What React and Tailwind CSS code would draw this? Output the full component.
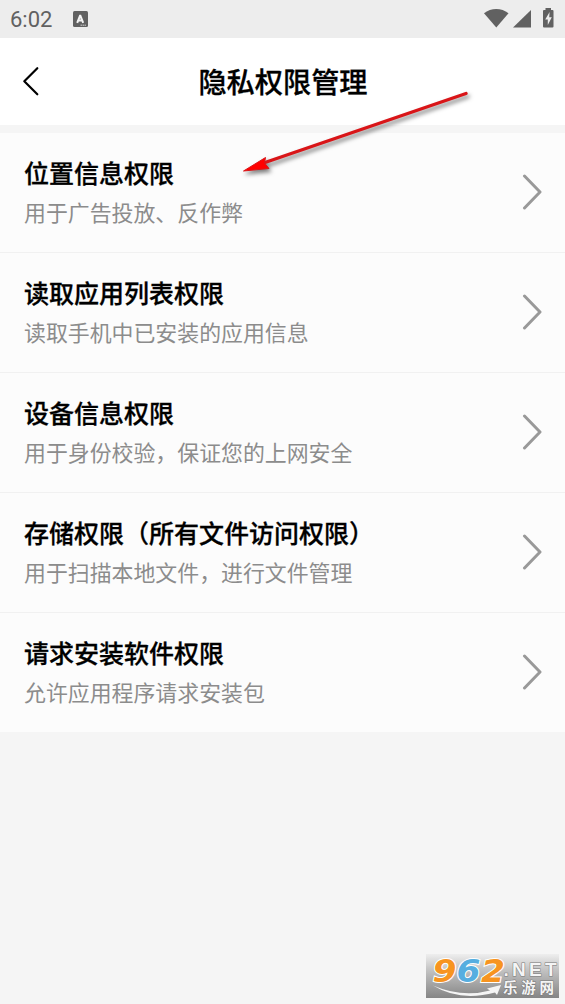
import React from 'react';

const permissions = [
  { id: 'location', title: '位置信息权限', description: '用于广告投放、反作弊' },
  { id: 'apps', title: '读取应用列表权限', description: '读取手机中已安装的应用信息' },
  { id: 'device', title: '设备信息权限', description: '用于身份校验，保证您的上网安全' },
  { id: 'storage', title: '存储权限（所有文件访问权限）', description: '用于扫描本地文件，进行文件管理' },
  { id: 'install', title: '请求安装软件权限', description: '允许应用程序请求安装包' },
];

const StatusBar = () => (
  <div className="flex h-[38px] items-center justify-between bg-[#ededed] pl-[10px] pr-[10px] text-[#616161]">
    <div className="flex items-center gap-[21px]">
      <span className="font-[Roboto,sans-serif] text-[22px] leading-[38px] pt-[2px]">6:02</span>
      <svg width="15" height="16" viewBox="0 0 15 16">
        <rect width="15" height="16" rx="1.5" fill="#616161" />
        <path d="M4.200 11.800 7 4.800h.4l2.800 7M5.200 9.600h4" fill="none" stroke="#f4f4f4" strokeWidth="2" />
        <path d="M7.500 14.200H13.500" stroke="#d0d0d0" strokeWidth="1" strokeDasharray="1.5 .5" />
      </svg>
    </div>
    <svg width="71" height="22" viewBox="0 0 71 22" fill="#616161">
      <path d="M0 5.200C7-.5 17.500-.5 24.500 5.200L12.300 19.500Z" />
      <path d="M47 2v17.500H29Z" />
      <path d="M61.500 0h5.500v2h1.500q1 0 1 1v15.500q0 1-1 1H60q-1 0-1-1V3q0-1 1-1h1.500Z" />
      <path d="M65.600 4 61.200 11.500h2.600v5.500l4-7.800h-2.600Z" fill="#ededed" />
    </svg>
  </div>
);

const Header = () => (
  <header className="relative flex h-[87px] items-center justify-center bg-white pb-[2px] pl-px">
    <button aria-label="返回" className="absolute left-[22px] top-[28px]">
      <svg width="18" height="31" viewBox="0 0 18 31" fill="none">
        <path d="M15.300 2.200 2.300 15.300l13 13" stroke="#000" strokeWidth="2.200" strokeLinecap="round" strokeLinejoin="round" />
      </svg>
    </button>
    <h1 className="text-[28.2px] leading-[40px] font-medium text-black [-webkit-text-stroke:0.3px_black]">隐私权限管理</h1>
  </header>
);

const PermissionRow = ({ title, description }) => (
  <li className="flex h-[120px] items-center justify-between border-b border-[#f1f1f1] bg-[#fcfcfc] pb-px pl-6 pr-[23px] last:h-[119px] last:border-b-0">
    <div>
      <h2 className="text-[25px] leading-[40px] font-medium text-black [-webkit-text-stroke:0.3px_black]">{title}</h2>
      <p className="text-[21.9px] leading-[40px] text-[#8c8c8c]">{description}</p>
    </div>
    <svg width="20" height="36" viewBox="0 0 20 36" fill="none">
      <path d="M2.500 2 18 18 2.500 34" stroke="#999" strokeWidth="3" strokeLinecap="round" strokeLinejoin="round" />
    </svg>
  </li>
);

const Arrow = () => (
  <svg
    className="pointer-events-none absolute left-[236px] top-[86px] [filter:drop-shadow(2px_3px_2px_rgb(0_0_0/0.5))]"
    width="240"
    height="96"
    viewBox="0 0 240 96"
  >
    <path d="M230 7.500 29 76.500" stroke="#d91518" strokeWidth="3.400" strokeLinecap="round" />
    <path d="M7.500 85 29.500 71.500 28.500 77 33 82.500Z" fill="#f00" stroke="#d91518" strokeWidth="1" />
  </svg>
);

const Watermark = () => (
  <svg className="absolute left-[426px] top-[954px] overflow-visible" width="133" height="44" viewBox="0 0 133 44">
    <defs>
      <linearGradient id="plate" x1="0" y1="0" x2="0" y2="1">
        <stop offset="0" stopColor="#eeeeee" />
        <stop offset="0.350" stopColor="#c4c4c4" />
        <stop offset="1" stopColor="#858585" />
      </linearGradient>
    </defs>
    <rect width="133" height="44" fill="url(#plate)" />
    <g
      fontFamily="'DejaVu Sans', sans-serif"
      fontSize="31.500"
      fontWeight="700"
      fontStyle="italic"
      stroke="#fff"
      strokeWidth="2"
      paintOrder="stroke"
    >
      <text x="6.500" y="27.500" fill="#f79420" textLength="24" lengthAdjust="spacingAndGlyphs">9</text>
      <text x="30.500" y="27.500" fill="#56aee0" textLength="24" lengthAdjust="spacingAndGlyphs">6</text>
      <text x="55" y="27.500" fill="#f79420" textLength="24" lengthAdjust="spacingAndGlyphs">2</text>
    </g>
    <path d="M7 31.500Q36 44 64 36.500L61 34.500 75 31 71 41 69 38.500Q34 48 7 31.500Z" fill="#f5f5f5" />
    <g fill="#f5f5f5" stroke="#777" strokeWidth="1" paintOrder="stroke" fontWeight="700">
      <text x="77.500" y="22" fontFamily="'Liberation Sans', sans-serif" fontSize="19" textLength="53" lengthAdjust="spacing">.NET</text>
      <text x="77" y="39" fontFamily="'Liberation Sans', 'Noto Sans CJK SC', sans-serif" fontSize="14.500" textLength="51">乐游网</text>
    </g>
  </svg>
);

const App = () => {
  return (
    <div className="relative h-[1004px] w-[565px] overflow-hidden bg-[#f5f5f5] font-['Noto_Sans_CJK_SC',sans-serif]">
      <StatusBar />
      <Header />
      <ul className="mt-[8px]">
        {permissions.map((item) => (
          <PermissionRow key={item.id} title={item.title} description={item.description} />
        ))}
      </ul>
      <Arrow />
      <Watermark />
    </div>
  );
};

export default App;
